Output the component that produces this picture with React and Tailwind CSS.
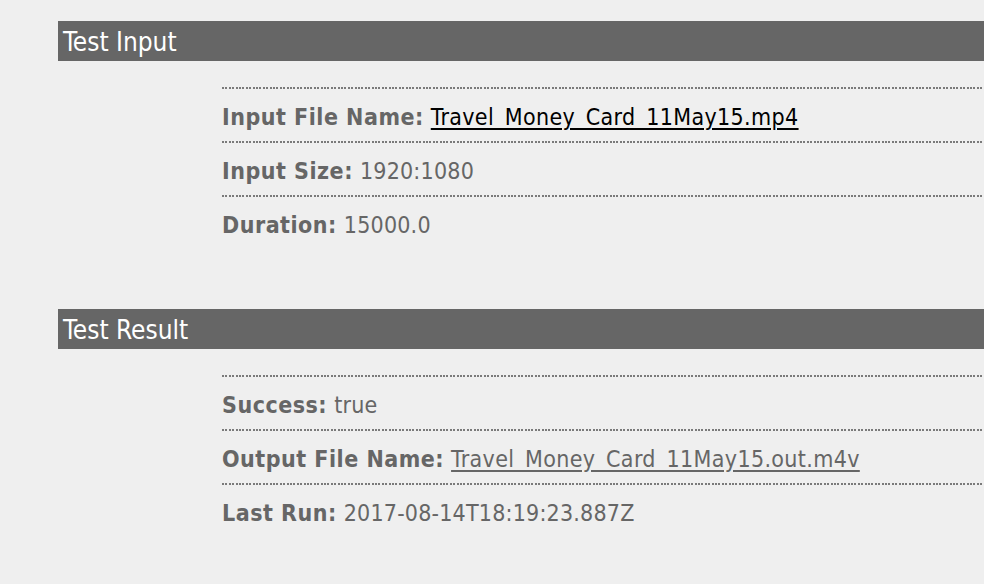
const sections = [
    {
        title: "Test Input",
        rows: [
            { label: "Input File Name:", value: "Travel_Money_Card_11May15.mp4", link: true, visited: false },
            { label: "Input Size:", value: "1920:1080" },
            { label: "Duration:", value: "15000.0" },
        ],
    },
    {
        title: "Test Result",
        rows: [
            { label: "Success:", value: "true" },
            { label: "Output File Name:", value: "Travel_Money_Card_11May15.out.m4v", link: true, visited: true },
            { label: "Last Run:", value: "2017-08-14T18:19:23.887Z" },
        ],
    },
];

function Row({ label, value, link, visited }) {
    return (
        <div className="flex flex-col">
            <div className="h-[2px] bg-[repeating-linear-gradient(to_right,#7a7a7a_0_2px,transparent_2px_3.4px)]" />
            <div className="h-[52px] flex items-center pt-[4px] text-[23px] text-[#666]">
                <span className="font-bold tracking-[0.5px] mr-[7px]">{label}</span>
                {link ? (
                    <a href="#" className={`underline decoration-[1.5px] underline-offset-[3px] tracking-[0.35px] ${visited ? "text-[#666]" : "text-black"}`}>
                        {value}
                    </a>
                ) : (
                    <span className="tracking-[0.2px]">{value}</span>
                )}
            </div>
        </div>
    );
}

export default function App() {
    return (
        <main className="min-h-[584px] bg-[#efefef] pt-[21px] pl-[58px] font-['DejaVu_Sans_Condensed','DejaVu_Sans',sans-serif]">
            {sections.map((section) => (
                <section key={section.title} className="mb-[60px]">
                    <div className="h-[40px] bg-[#666] flex items-center pl-[5px] pt-[2px] text-white text-[26px]">{section.title}</div>
                    <div className="ml-[164px] mt-[26px]">
                        {section.rows.map((row) => (
                            <Row key={row.label} {...row} />
                        ))}
                    </div>
                </section>
            ))}
        </main>
    );
}
